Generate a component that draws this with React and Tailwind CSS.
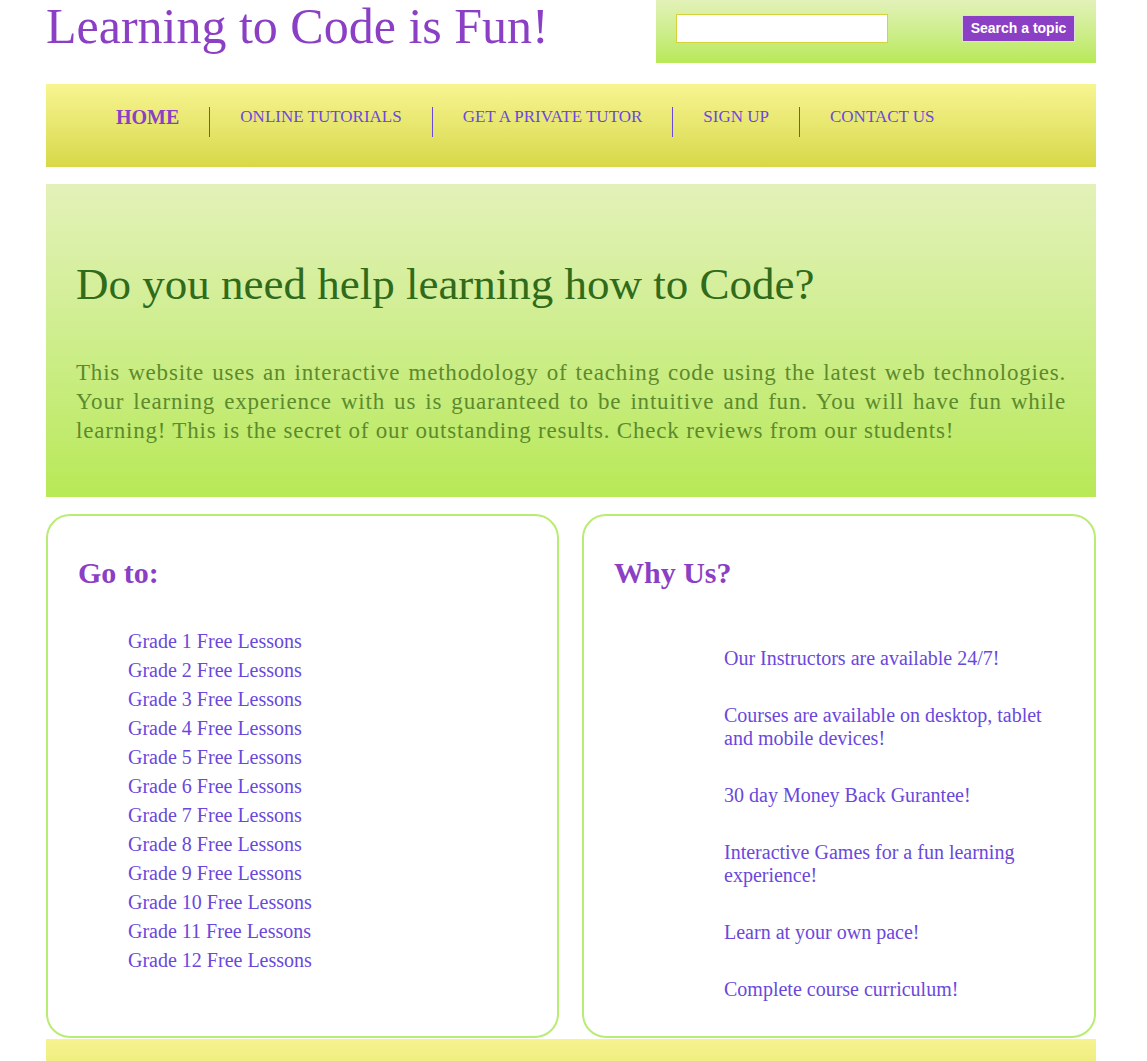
import React from "react";

const NAV = ["ONLINE TUTORIALS", "GET A PRIVATE TUTOR", "SIGN UP", "CONTACT US"];

const GRADES = Array.from({ length: 12 }, (_, i) => `Grade ${i + 1} Free Lessons`);

const REASONS = [
  "Our Instructors are available 24/7!",
  "Courses are available on desktop, tablet and mobile devices!",
  "30 day Money Back Gurantee!",
  "Interactive Games for a fun learning experience!",
  "Learn at your own pace!",
  "Complete course curriculum!",
];

export default function App() {
  return (
    <div className="min-h-[1061px] bg-white font-['Liberation_Serif','Times_New_Roman',serif]">
      <div className="mx-[46px] w-[1050px]">
        {/* ---------- Header ---------- */}
        <header className="flex items-start justify-between">
          <h1 className="pt-px text-[50px] leading-[50px] text-[#8b3fc4]">Learning to Code is Fun!</h1>
          <div className="flex h-[63px] w-[440px] items-start justify-between bg-gradient-to-b from-[#e3f1b8] to-[#b8e955] pl-[20px] pr-[21px] pt-[14px]">
            <input
              type="text"
              className="h-[29px] w-[212px] border border-[#d4d43a] bg-white outline-none"
            />
            <button className="mt-px h-[27px] w-[113px] border border-[#dcdcdc] bg-[#8b3fc4] font-['Liberation_Sans',Arial,sans-serif] text-[14px] font-bold text-white">
              Search a topic
            </button>
          </div>
        </header>

        {/* ---------- Nav ---------- */}
        <nav className="mt-[21px] h-[83px] bg-gradient-to-b from-[#f7f590] to-[#d8d846] pl-[40px] pt-[23px]">
          <ul className="flex items-start">
            <li className="h-[30px] border-r border-[#6a48dc] px-[30px] text-[20px] font-bold leading-[20px] text-[#8b3fc4]">
              HOME
            </li>
            {NAV.map((item, idx) => (
              <li
                key={item}
                className={`h-[30px] px-[30px] text-[17px] leading-[20px] text-[#6a48dc] ${
                  idx < NAV.length - 1 ? "border-r border-[#6a48dc]" : ""
                }`}
              >
                {item}
              </li>
            ))}
          </ul>
        </nav>

        {/* ---------- Hero ---------- */}
        <section className="mt-[17px] h-[313px] bg-gradient-to-b from-[#e3f1b8] to-[#b8e955] px-[30px] pt-[75px]">
          <h2 className="text-[45px] leading-[51.75px] text-[#2f6b1a]">
            Do you need help learning how to Code?
          </h2>
          <p className="mt-[47px] text-justify text-[23px] leading-[29px] tracking-[0.8px] text-[#5c8a2d]">
            This website uses an interactive methodology of teaching code using the latest web
            technologies. Your learning experience with us is guaranteed to be intuitive and fun.
            You will have fun while learning! This is the secret of our outstanding results. Check
            reviews from our students!
          </p>
        </section>

        {/* ---------- Cards ---------- */}
        <div className="mt-[17px] grid grid-cols-[513px_514px] gap-[23px]">
          <div className="rounded-[24px] border-2 border-[#b9ec72] px-[30px] pb-[35px] pt-[40px]">
            <h3 className="text-[30px] font-bold leading-[34.5px] text-[#8b3fc4]">Go to:</h3>
            <ul className="mt-[36px] pl-[50px] text-[20px] leading-[29px] text-[#6a48dc]">
              {GRADES.map((g) => (
                <li key={g}>{g}</li>
              ))}
            </ul>
          </div>
          <div className="rounded-[24px] border-2 border-[#b9ec72] px-[30px] pb-[35px] pt-[40px]">
            <h3 className="text-[30px] font-bold leading-[34.5px] text-[#8b3fc4]">Why Us?</h3>
            <ul className="mt-[56px] flex flex-col gap-[34px] pl-[110px] text-[20px] leading-[23px] text-[#6a48dc]">
              {REASONS.map((r) => (
                <li key={r}>{r}</li>
              ))}
            </ul>
          </div>
        </div>

        {/* ---------- Footer ---------- */}
        <footer className="mt-px h-[60px] bg-gradient-to-b from-[#f6f390] to-[#e6e466]" />
      </div>
    </div>
  );
}
